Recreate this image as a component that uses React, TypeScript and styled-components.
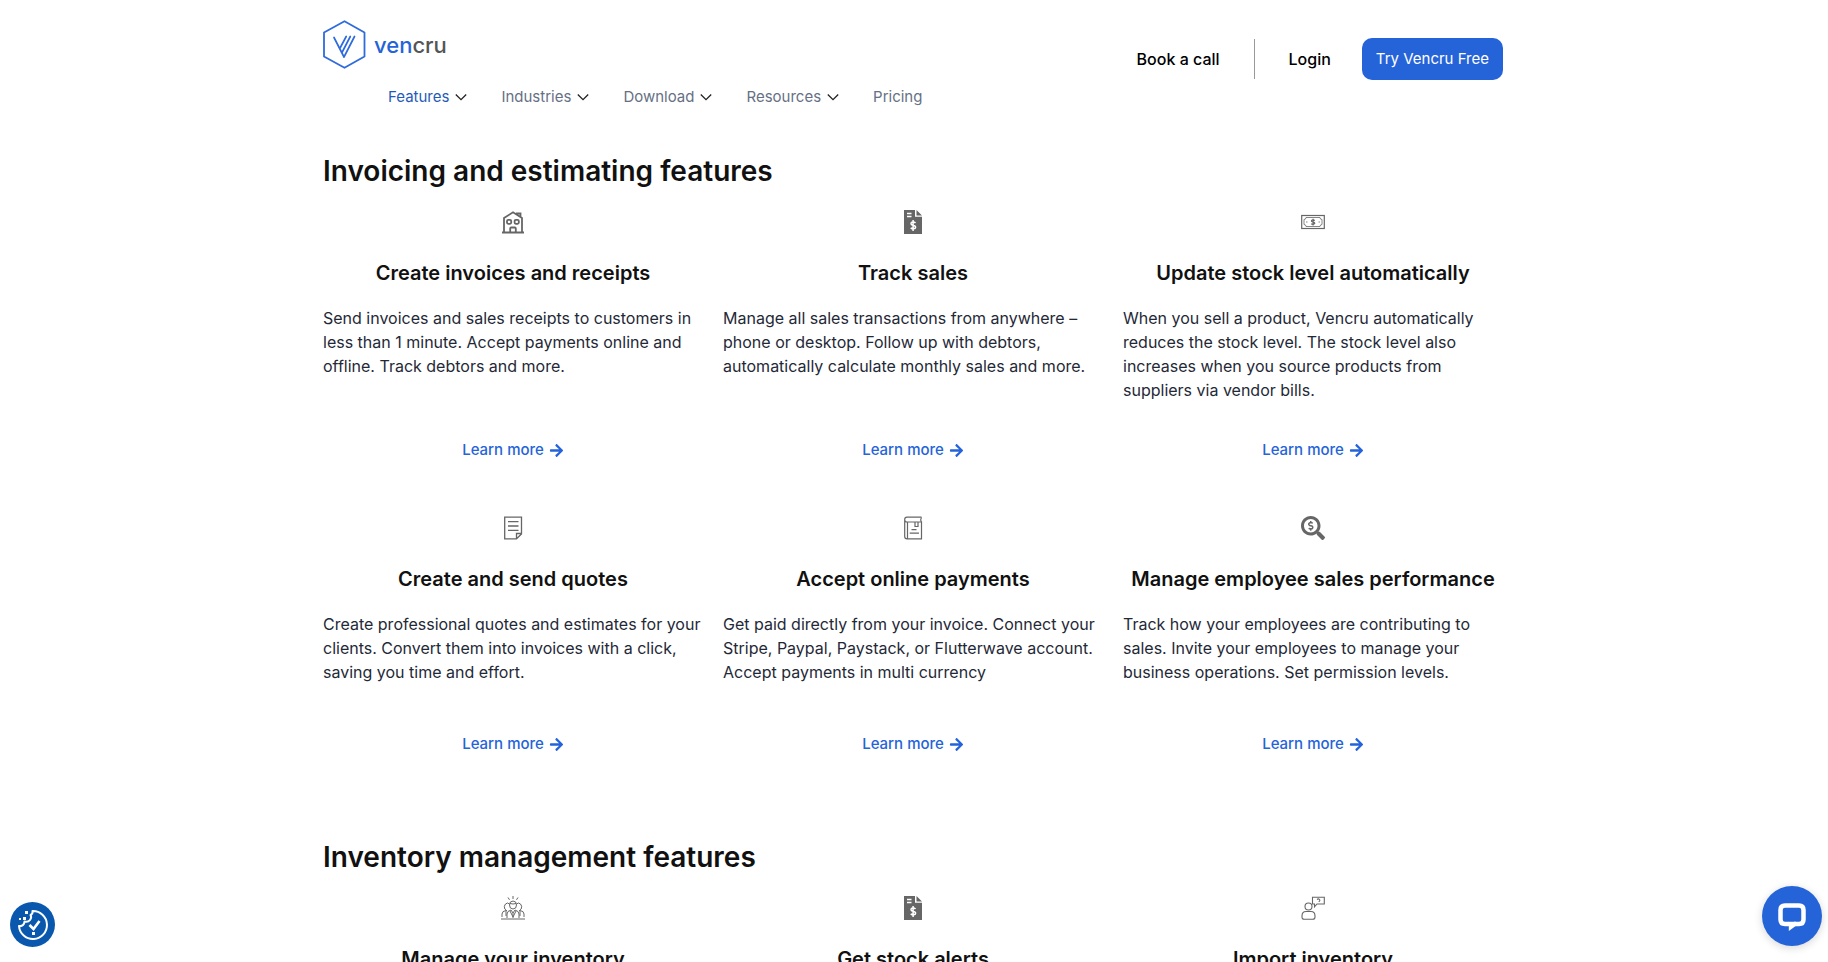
import React from 'react';
import styled, { createGlobalStyle } from 'styled-components';
import { FaArrowRight, FaSearchDollar } from 'react-icons/fa';

const GlobalStyle = createGlobalStyle`
  *, *::before, *::after { box-sizing: border-box; }
  body {
    margin: 0;
    background: #fff;
    font-family: Inter, "Liberation Sans", sans-serif;
    color: #111;
  }
  h2, h3, p, ul { margin: 0; padding: 0; }
  a { text-decoration: none; color: inherit; }
`;

const Page = styled.div`
  padding: 0 22px 0 20px;
`;

const Container = styled.div`
  max-width: 1180px;
  margin: 0 auto;
`;

const Header = styled.header`
  display: flex;
  justify-content: space-between;
  align-items: flex-start;
  padding-top: 20px;
`;

const Brand = styled.div`
  display: flex;
  flex-direction: column;
  gap: 16px;
`;

const Logo = styled.a`
  display: flex;
  align-items: center;
  gap: 8px;
  font-size: 22px;
  line-height: 24px;
  font-weight: 500;
  color: #555;
`;

const Wordmark = styled.span`
  b { font-weight: 500; color: #2563d9; }
`;

const Nav = styled.nav`
  display: flex;
  gap: 34px;
  padding-left: 65px;
`;

const NavButton = styled.button<{ $active?: boolean }>`
  display: flex;
  align-items: center;
  gap: 6px;
  padding: 0;
  border: 0;
  background: none;
  font: 400 15px/24px Inter, "Liberation Sans", sans-serif;
  color: ${p => (p.$active ? '#1f5bb8' : '#667085')};
  cursor: pointer;
  svg { color: #222; }
`;

const NavLink = styled.a`
  font-size: 15px;
  line-height: 24px;
  color: #667085;
`;

const Actions = styled.div`
  display: flex;
  align-items: center;
  padding-top: 18px;
`;

const ActionLink = styled.a`
  font-size: 16px;
  line-height: 24px;
  font-weight: 500;
  color: #000;
`;

const Divider = styled.span`
  width: 1px;
  height: 40px;
  margin: 0 34px;
  background: #999;
`;

const Cta = styled.a`
  margin-left: 31px;
  padding: 10px 14px;
  border-radius: 10px;
  background: #2563d9;
  color: #fff;
  font-size: 15px;
  line-height: 22px;
`;

const Section = styled.section<{ $top: number }>`
  padding-top: ${p => p.$top}px;
`;

const SectionTitle = styled.h2`
  font-size: 28px;
  line-height: 36px;
  font-weight: 600;
`;

const Grid = styled.div`
  display: grid;
  grid-template-columns: repeat(3, minmax(0, 1fr));
  gap: 54px 20px;
  margin-top: 21px;
`;

const Card = styled.article`
  display: flex;
  flex-direction: column;
  align-items: center;
`;

const IconBox = styled.div`
  height: 24px;
  color: #666;
  svg { display: block; width: 24px; height: 24px; }
`;

const CardTitle = styled.h3`
  margin-top: 27px;
  font-size: 20px;
  line-height: 24px;
  font-weight: 600;
  white-space: nowrap;
`;

const CardText = styled.p`
  align-self: stretch;
  flex: 1;
  min-height: 84px;
  margin-top: 21px;
  font-size: 16px;
  line-height: 24px;
  color: #1f2937;
`;

const LearnMore = styled.a`
  display: flex;
  align-items: center;
  gap: 5px;
  margin-top: 36px;
  font-size: 15px;
  line-height: 24px;
  font-weight: 500;
  color: #2563d9;
`;

const RoundButton = styled.button`
  position: fixed;
  padding: 0;
  border: 0;
  border-radius: 50%;
  cursor: pointer;
  svg { display: block; width: 100%; height: 100%; }
`;

const CookieButton = styled(RoundButton)`
  left: 10px;
  bottom: 15px;
  width: 45px;
  height: 45px;
  background: #0a58ae;
`;

const ChatButton = styled(RoundButton)`
  right: 6px;
  bottom: 16px;
  width: 60px;
  height: 60px;
  background: #2563d9;
  box-shadow: 0 2px 8px rgba(0, 0, 0, 0.16);
`;

const LogoMark = () => (
  <svg width="43" height="49" viewBox="0 0 43 49" fill="none" stroke="#2f6bdc" strokeWidth="1.800" aria-hidden="true">
    <path d="M21.500 1.200 41.500 12.500V36.500L21.500 47.800 1 36.500V12.500Z" strokeLinejoin="round" />
    <path d="M11 17.500 21 37 31.500 16.500M19 32.500 27.300 16.500M16.800 28.500 23.200 16.500" strokeWidth="1.700" strokeLinecap="round" strokeLinejoin="round" />
  </svg>
);

const Chevron = () => (
  <svg width="12" height="12" viewBox="0 0 12 12" fill="none" stroke="currentColor" strokeWidth="1.300" aria-hidden="true">
    <path d="M.8 3.500 6 8.700 11.200 3.500" />
  </svg>
);

const Line = ({ children, w = 1.3 }: { children: React.ReactNode; w?: number }) => (
  <svg width="24" height="24" viewBox="0 0 24 24" fill="none" stroke="currentColor" strokeWidth={w} aria-hidden="true">
    {children}
  </svg>
);

const House = () => (
  <Line w={1.8}>
    <path d="M1 22.500H23M3 22.500V8L12 2.300l9 5.700v14.500M15 3.500H19.500V6.500" />
    <rect x="6" y="9.800" width="4.200" height="4" rx="1.200" />
    <rect x="13.600" y="9.800" width="4.200" height="4" rx="1.200" />
    <path d="M9.200 22V18.500q0-1 1-1h3.600q1 0 1 1V22" />
  </Line>
);

const InvoiceFile = () => (
  <Line w={1.5}>
    <path d="M3 0H14V6.800H21V24H3ZM15.500 0 21 5.500H15.500Z" fill="currentColor" stroke="none" />
    <path d="M6 3.500H10.500M6 6.500H10.500" stroke="#fff" />
    <path d="M14.500 13q-1-1.200-3-.9-1.500.3-1.500 1.600 0 1.100 2 1.600 2.600.5 2.600 1.900 0 1.500-2 1.600-1.700 0-2.900-1M12.100 10v11" stroke="#fff" />
  </Line>
);

const Banknote = () => (
  <Line w={1.2}>
    <rect x=".7" y="5.500" width="22.600" height="13" />
    <path d="M5 7.500H19q0 2 2 2v5q-2 0-2 2H5q0-2-2-2v-5q2 0 2-2ZM5 12h1.500M17.500 12H19" strokeWidth=".8" />
    <path d="M13.800 10.500q-1.500-1-2.600-.5t-.5 1.500l2.300.8q1.500 1 0 1.700t-2.800-.3M12.100 8.700v6.800" strokeWidth="1.200" />
  </Line>
);

const Sheet = () => (
  <Line w={1.3}>
    <path d="M3.700 1.200H20.500V18L15.500 22.800H3.700ZM20.500 17.500H15.500V22.800M7 5.700H17.500M7 10H17.500M7 14.300H17.500" />
  </Line>
);

const Ledger = () => (
  <Line w={1.2}>
    <path d="M20.500 1.200H6q-2.300 0-2.300 2.400V20.500q0 2.300 2.300 2.300H20.500V6H6Q3.700 6 3.700 3.800M20.500 1.200q-1.500 2.400 0 4.800M6.500 6V22.500M14 6v4.500h3V6M10.500 13.700H15.500M8.700 17.200H18" />
  </Line>
);

const Team = () => (
  <Line w={1}>
    <path d="M12 0v3M7 1.500l1.500 2.300M17 1.500l-1.500 2.300" />
    <ellipse cx="12" cy="9" rx="3.500" ry="4" />
    <path d="M8.500 8Q6.500 6 4.500 8t-.7 5L6 15M15.500 8q2-2 4 0t.7 5L18 15M9 7.500q3 1 6 0M1 21V18q0-3 4-3.500M23 21V18q0-3-4-3.500M6 22V18q0-3 4-4l2 3 2-3q4 1 4 4v4M9 15l3 6 3-6M12 17v5M0 23H24M5 15v5M19 15v5" />
  </Line>
);

const Advisor = () => (
  <Line w={1.1}>
    <circle cx="7.500" cy="10.500" r="3.500" />
    <path d="M1 21V20Q1 15.500 5 15.500h5q4 0 4 4.500v1q0 2.300-2.300 2.300H3.300Q1 23.300 1 21ZM11.500 1.200H23.300V8H16l-2.500 2.800V8h-2ZM16 3.500q1.500-1.200 2.500 0t-.8 2.300" />
  </Line>
);

type Feature = { icon: React.ReactNode; title: string; text?: string };

const invoicing: Feature[] = [
  { icon: <House />, title: 'Create invoices and receipts', text: 'Send invoices and sales receipts to customers in less than 1 minute. Accept payments online and offline. Track debtors and more.' },
  { icon: <InvoiceFile />, title: 'Track sales', text: 'Manage all sales transactions from anywhere – phone or desktop. Follow up with debtors, automatically calculate monthly sales and more.' },
  { icon: <Banknote />, title: 'Update stock level automatically', text: 'When you sell a product, Vencru automatically reduces the stock level. The stock level also increases when you source products from suppliers via vendor bills.' },
  { icon: <Sheet />, title: 'Create and send quotes', text: 'Create professional quotes and estimates for your clients. Convert them into invoices with a click, saving you time and effort.' },
  { icon: <Ledger />, title: 'Accept online payments', text: 'Get paid directly from your invoice. Connect your Stripe, Paypal, Paystack, or Flutterwave account. Accept payments in multi currency' },
  { icon: <FaSearchDollar />, title: 'Manage employee sales performance', text: 'Track how your employees are contributing to sales. Invite your employees to manage your business operations. Set permission levels.' },
];

const inventory: Feature[] = [
  { icon: <Team />, title: 'Manage your inventory' },
  { icon: <InvoiceFile />, title: 'Get stock alerts' },
  { icon: <Advisor />, title: 'Import inventory' },
];

const FeatureSection = ({ title, items, top }: { title: string; items: Feature[]; top: number }) => (
  <Section $top={top}>
    <SectionTitle>{title}</SectionTitle>
    <Grid>
      {items.map(f => (
        <Card key={f.title}>
          <IconBox>{f.icon}</IconBox>
          <CardTitle>{f.title}</CardTitle>
          {f.text && (
            <>
              <CardText>{f.text}</CardText>
              <LearnMore href="#">
                Learn more <FaArrowRight size={15} aria-hidden="true" />
              </LearnMore>
            </>
          )}
        </Card>
      ))}
    </Grid>
  </Section>
);

export default function App() {
  return (
    <Page>
      <GlobalStyle />
      <Container>
        <Header>
          <Brand>
            <Logo href="#">
              <LogoMark />
              <Wordmark><b>ven</b>cru</Wordmark>
            </Logo>
            <Nav>
              <NavButton $active>Features <Chevron /></NavButton>
              <NavButton>Industries <Chevron /></NavButton>
              <NavButton>Download <Chevron /></NavButton>
              <NavButton>Resources <Chevron /></NavButton>
              <NavLink href="#">Pricing</NavLink>
            </Nav>
          </Brand>
          <Actions>
            <ActionLink href="#">Book a call</ActionLink>
            <Divider />
            <ActionLink href="#">Login</ActionLink>
            <Cta href="#">Try Vencru Free</Cta>
          </Actions>
        </Header>
        <main>
          <FeatureSection title="Invoicing and estimating features" items={invoicing} top={44} />
          <FeatureSection title="Inventory management features" items={inventory} top={83} />
        </main>
      </Container>
      <CookieButton aria-label="Cookie preferences">
        <svg viewBox="0 0 45 45" fill="none" stroke="#fff" strokeWidth="2">
          <path d="M22.500 9A14 14 0 1 1 9 24q2.500.5 4-1t1.500-3.500q3.500 1 5.500-1.500t.5-5q2.500-1 2-4Z" strokeLinejoin="round" />
          <path d="m19.500 23 4 4 6-8" strokeWidth="2.600" />
          <path d="M22 30h3v3h-3ZM15 9h3v3h-3ZM13 15h3v3h-3ZM9 16h2v2H9Z" fill="#fff" stroke="none" />
        </svg>
      </CookieButton>
      <ChatButton aria-label="Open chat">
        <svg viewBox="0 0 60 60" fill="none" stroke="#fff" strokeWidth="4.500">
          <path d="M27 38H23q-4.500 0-4.500-4.500V24q0-4.500 4.500-4.500H37q4.500 0 4.500 4.500v9.500Q41.500 38 37 38H32" />
          <path d="M26.800 35.700V45L34 39.800V35.700H32Z" fill="#fff" stroke="none" />
        </svg>
      </ChatButton>
    </Page>
  );
}
